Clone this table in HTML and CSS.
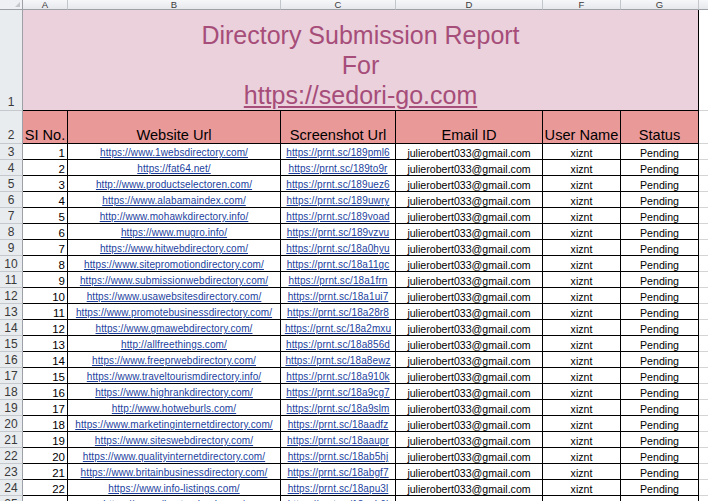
FILE: index.html
```html
<!DOCTYPE html>
<html>
<head>
<meta charset="utf-8">
<link rel="stylesheet" href="styles.css">
</head>
<body>
<div class="sheet">
  <div class="row">
    <div class="corner"><span class="tri"></span></div>
    <div class="colhead">A</div>
    <div class="colhead">B</div>
    <div class="colhead">C</div>
    <div class="colhead">D</div>
    <div class="colhead">F</div>
    <div class="colhead">G</div>
    <div class="colhead last"></div>
  </div>
  <div class="row">
    <div class="rowhead bottom">1</div>
    <div class="title">
      <div>Directory Submission Report</div>
      <div>For</div>
      <div><a class="title-link">https://sedori-go.com</a></div>
    </div>
    <div class="empty title-row"></div>
  </div>
  <div class="row">
    <div class="rowhead bottom">2</div>
    <div class="hcell">SI No.</div>
    <div class="hcell">Website Url</div>
    <div class="hcell">Screenshot Url</div>
    <div class="hcell">Email ID</div>
    <div class="hcell">User Name</div>
    <div class="hcell">Status</div>
    <div class="empty"></div>
  </div>
  <div class="row"><div class="rowhead">3</div><div class="num">1</div><div class="url"><a>https://www.1websdirectory.com/</a></div><div class="url"><a>https://prnt.sc/189pml6</a></div><div class="txt">julierobert033@gmail.com</div><div class="txt">xiznt</div><div class="txt">Pending</div><div class="empty"></div></div>
  <div class="row"><div class="rowhead">4</div><div class="num">2</div><div class="url"><a>https://fat64.net/</a></div><div class="url"><a>https://prnt.sc/189to9r</a></div><div class="txt">julierobert033@gmail.com</div><div class="txt">xiznt</div><div class="txt">Pending</div><div class="empty"></div></div>
  <div class="row"><div class="rowhead">5</div><div class="num">3</div><div class="url"><a>http://www.productselectoren.com/</a></div><div class="url"><a>https://prnt.sc/189uez6</a></div><div class="txt">julierobert033@gmail.com</div><div class="txt">xiznt</div><div class="txt">Pending</div><div class="empty"></div></div>
  <div class="row"><div class="rowhead">6</div><div class="num">4</div><div class="url"><a>https://www.alabamaindex.com/</a></div><div class="url"><a>https://prnt.sc/189uwry</a></div><div class="txt">julierobert033@gmail.com</div><div class="txt">xiznt</div><div class="txt">Pending</div><div class="empty"></div></div>
  <div class="row"><div class="rowhead">7</div><div class="num">5</div><div class="url"><a>http://www.mohawkdirectory.info/</a></div><div class="url"><a>https://prnt.sc/189voad</a></div><div class="txt">julierobert033@gmail.com</div><div class="txt">xiznt</div><div class="txt">Pending</div><div class="empty"></div></div>
  <div class="row"><div class="rowhead">8</div><div class="num">6</div><div class="url"><a>https://www.mugro.info/</a></div><div class="url"><a>https://prnt.sc/189vzvu</a></div><div class="txt">julierobert033@gmail.com</div><div class="txt">xiznt</div><div class="txt">Pending</div><div class="empty"></div></div>
  <div class="row"><div class="rowhead">9</div><div class="num">7</div><div class="url"><a>https://www.hitwebdirectory.com/</a></div><div class="url"><a>https://prnt.sc/18a0hyu</a></div><div class="txt">julierobert033@gmail.com</div><div class="txt">xiznt</div><div class="txt">Pending</div><div class="empty"></div></div>
  <div class="row"><div class="rowhead">10</div><div class="num">8</div><div class="url"><a>https://www.sitepromotiondirectory.com/</a></div><div class="url"><a>https://prnt.sc/18a11gc</a></div><div class="txt">julierobert033@gmail.com</div><div class="txt">xiznt</div><div class="txt">Pending</div><div class="empty"></div></div>
  <div class="row"><div class="rowhead">11</div><div class="num">9</div><div class="url"><a>https://www.submissionwebdirectory.com/</a></div><div class="url"><a>https://prnt.sc/18a1frn</a></div><div class="txt">julierobert033@gmail.com</div><div class="txt">xiznt</div><div class="txt">Pending</div><div class="empty"></div></div>
  <div class="row"><div class="rowhead">12</div><div class="num">10</div><div class="url"><a>https://www.usawebsitesdirectory.com/</a></div><div class="url"><a>https://prnt.sc/18a1ui7</a></div><div class="txt">julierobert033@gmail.com</div><div class="txt">xiznt</div><div class="txt">Pending</div><div class="empty"></div></div>
  <div class="row"><div class="rowhead">13</div><div class="num">11</div><div class="url"><a>https://www.promotebusinessdirectory.com/</a></div><div class="url"><a>https://prnt.sc/18a28r8</a></div><div class="txt">julierobert033@gmail.com</div><div class="txt">xiznt</div><div class="txt">Pending</div><div class="empty"></div></div>
  <div class="row"><div class="rowhead">14</div><div class="num">12</div><div class="url"><a>https://www.gmawebdirectory.com/</a></div><div class="url"><a>https://prnt.sc/18a2mxu</a></div><div class="txt">julierobert033@gmail.com</div><div class="txt">xiznt</div><div class="txt">Pending</div><div class="empty"></div></div>
  <div class="row"><div class="rowhead">15</div><div class="num">13</div><div class="url"><a>http://allfreethings.com/</a></div><div class="url"><a>https://prnt.sc/18a856d</a></div><div class="txt">julierobert033@gmail.com</div><div class="txt">xiznt</div><div class="txt">Pending</div><div class="empty"></div></div>
  <div class="row"><div class="rowhead">16</div><div class="num">14</div><div class="url"><a>https://www.freeprwebdirectory.com/</a></div><div class="url"><a>https://prnt.sc/18a8ewz</a></div><div class="txt">julierobert033@gmail.com</div><div class="txt">xiznt</div><div class="txt">Pending</div><div class="empty"></div></div>
  <div class="row"><div class="rowhead">17</div><div class="num">15</div><div class="url"><a>https://www.traveltourismdirectory.info/</a></div><div class="url"><a>https://prnt.sc/18a910k</a></div><div class="txt">julierobert033@gmail.com</div><div class="txt">xiznt</div><div class="txt">Pending</div><div class="empty"></div></div>
  <div class="row"><div class="rowhead">18</div><div class="num">16</div><div class="url"><a>https://www.highrankdirectory.com/</a></div><div class="url"><a>https://prnt.sc/18a9cg7</a></div><div class="txt">julierobert033@gmail.com</div><div class="txt">xiznt</div><div class="txt">Pending</div><div class="empty"></div></div>
  <div class="row"><div class="rowhead">19</div><div class="num">17</div><div class="url"><a>http://www.hotweburls.com/</a></div><div class="url"><a>https://prnt.sc/18a9slm</a></div><div class="txt">julierobert033@gmail.com</div><div class="txt">xiznt</div><div class="txt">Pending</div><div class="empty"></div></div>
  <div class="row"><div class="rowhead">20</div><div class="num">18</div><div class="url"><a>https://www.marketinginternetdirectory.com/</a></div><div class="url"><a>https://prnt.sc/18aadfz</a></div><div class="txt">julierobert033@gmail.com</div><div class="txt">xiznt</div><div class="txt">Pending</div><div class="empty"></div></div>
  <div class="row"><div class="rowhead">21</div><div class="num">19</div><div class="url"><a>https://www.siteswebdirectory.com/</a></div><div class="url"><a>https://prnt.sc/18aaupr</a></div><div class="txt">julierobert033@gmail.com</div><div class="txt">xiznt</div><div class="txt">Pending</div><div class="empty"></div></div>
  <div class="row"><div class="rowhead">22</div><div class="num">20</div><div class="url"><a>https://www.qualityinternetdirectory.com/</a></div><div class="url"><a>https://prnt.sc/18ab5hj</a></div><div class="txt">julierobert033@gmail.com</div><div class="txt">xiznt</div><div class="txt">Pending</div><div class="empty"></div></div>
  <div class="row"><div class="rowhead">23</div><div class="num">21</div><div class="url"><a>https://www.britainbusinessdirectory.com/</a></div><div class="url"><a>https://prnt.sc/18abgf7</a></div><div class="txt">julierobert033@gmail.com</div><div class="txt">xiznt</div><div class="txt">Pending</div><div class="empty"></div></div>
  <div class="row"><div class="rowhead">24</div><div class="num">22</div><div class="url"><a>https://www.info-listings.com/</a></div><div class="url"><a>https://prnt.sc/18apu3l</a></div><div class="txt">julierobert033@gmail.com</div><div class="txt">xiznt</div><div class="txt">Pending</div><div class="empty"></div></div>
  <div class="row"><div class="rowhead">25</div><div class="num">23</div><div class="url"><a>https://www.directorybook.com/</a></div><div class="url"><a>https://prnt.sc/18aqh6l</a></div><div class="txt">julierobert033@gmail.com</div><div class="txt">xiznt</div><div class="txt">Pending</div><div class="empty"></div></div>
</div>
</body>
</html>
```

FILE: styles.css
```css
html, body {
  margin: 0;
  padding: 0;
  background: #ffffff;
  overflow: hidden;
}

body {
  width: 708px;
  height: 501px;
  font-family: "Liberation Sans", Arial, sans-serif;
  color: #000;
}

.sheet {
  display: grid;
  grid-template-columns: 23px 45px 213px 115px 147px 78px 78px 20px;
  grid-template-rows: 10px 101px 33px repeat(23, 16px);
}

.sheet > .row {
  display: contents;
}

.sheet .row > div {
  box-sizing: border-box;
  overflow: hidden;
  white-space: nowrap;
}

.corner {
  position: relative;
  background: #eef0f3;
  border-right: 1px solid #9da0a6;
  border-bottom: 1px solid #9da0a6;
}

.tri {
  position: absolute;
  right: 2px;
  bottom: 2px;
  width: 0;
  height: 0;
  border-left: 5px solid transparent;
  border-bottom: 5px solid #c4c7cc;
}

.colhead {
  background: linear-gradient(#f6f7f9, #e6e8ec);
  border-right: 1px solid #c3c6cb;
  border-bottom: 1px solid #9da0a6;
  font-size: 9.5px;
  line-height: 9px;
  text-align: center;
  color: #3a3a3a;
}

.sheet .row > .colhead {
  overflow: visible;
}

.colhead.last {
  border-right: none;
}

.rowhead {
  background: #e9ecef;
  border-right: 1px solid #9da0a6;
  border-bottom: 1px solid #c5c8cd;
  font-size: 12px;
  line-height: 15px;
  padding-top: 1px;
  text-align: center;
  color: #3a3a3a;
}

.rowhead.bottom {
  display: flex;
  align-items: flex-end;
  justify-content: center;
  padding-top: 0;
  padding-bottom: 0;
}

.title {
  grid-column: 2 / 8;
  background: #ead1dc;
  border-right: 1px solid #000;
  border-bottom: 1px solid #000;
  display: flex;
  flex-direction: column;
  justify-content: flex-end;
  align-items: center;
  color: #a64d79;
  font-size: 25px;
  line-height: 30px;
  padding-bottom: 0;
}

.title-link {
  color: #a64d79;
  text-decoration: underline;
}

.hcell {
  background: #ea9999;
  border-right: 1px solid #000;
  border-bottom: 1px solid #000;
  display: flex;
  align-items: flex-end;
  justify-content: center;
  font-size: 14.6px;
  line-height: 15px;
  padding-bottom: 0;
}

.empty {
  border-bottom: 1px solid #d4d4d4;
}

.num {
  border-right: 1px solid #000;
  border-bottom: 1px solid #000;
  text-align: right;
  font-size: 11.5px;
  line-height: 15px;
  padding-top: 2px;
  padding-right: 2px;
}

.url {
  border-right: 1px solid #000;
  border-bottom: 1px solid #000;
  text-align: center;
  font-size: 10px;
  letter-spacing: 0.1px;
  line-height: 14px;
  padding-top: 2px;
}

.url a {
  color: #1c3f9e;
  text-decoration: underline;
}

.txt {
  border-right: 1px solid #000;
  border-bottom: 1px solid #000;
  text-align: center;
  font-size: 10.6px;
  line-height: 14px;
  padding-top: 2px;
}
```
